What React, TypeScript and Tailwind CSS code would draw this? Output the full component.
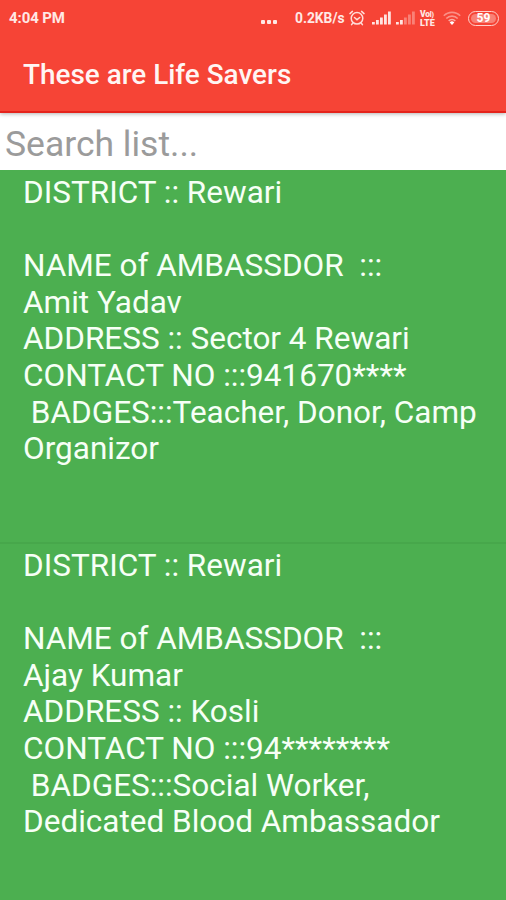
type Ambassador = {
  district: string;
  name: string;
  address: string;
  contact: string;
  badges: string;
};

const ambassadors: Ambassador[] = [
  {
    district: "Rewari",
    name: "Amit Yadav",
    address: "Sector 4 Rewari",
    contact: "941670****",
    badges: "Teacher, Donor, Camp Organizor",
  },
  {
    district: "Rewari",
    name: "Ajay Kumar",
    address: "Kosli",
    contact: "94********",
    badges: "Social Worker, Dedicated Blood Ambassador",
  },
];

const AlarmIcon = () => (
  <svg width="16" height="16" viewBox="0 0 16 16" fill="none" stroke="#ffdcd8" strokeWidth="1.5" strokeLinecap="round">
    <circle cx="8" cy="8.3" r="5.8" />
    <path d="M1 3.6 3.4 1.4M15 3.6 12.6 1.4M3.6 13.2 2.6 14.6M12.4 13.2l1 1.4M5.5 7.5 8 9.7l2.7-2.2" />
  </svg>
);

const SignalIcon = ({ level }: { level: number }) => (
  <svg width="19" height="14" viewBox="0 0 19 14" fill="#ffe4e1">
    {[2.5, 4.5, 7, 10, 13].map((height, i) => (
      <rect
        key={height}
        x={i * 4}
        y={13.5 - height}
        width="2.8"
        height={height}
        opacity={i < level ? 1 : 0.38}
      />
    ))}
  </svg>
);

const WifiIcon = () => (
  <svg width="18" height="14" viewBox="0 0 18 14" fill="none" stroke="#ffd9d5" strokeWidth="1.6">
    <path d="M0.8 4.8a11.6 11.6 0 0 1 16.4 0" opacity="0.5" />
    <path d="M3.3 7.5a8 8 0 0 1 11.4 0" opacity="0.55" />
    <path d="M5.7 10a4.7 4.7 0 0 1 6.6 0" opacity="0.7" />
    <path d="M9 14 6.7 11.4a3.2 3.2 0 0 1 4.6 0Z" fill="#ffffff" stroke="none" />
  </svg>
);

const StatusBar = () => (
  <div className="flex h-9 items-center pl-[9px] text-[#ffe8e5]">
    <span className="w-[252px] text-[15px] font-bold tracking-[-0.1px]">4:04 PM</span>
    <div className="flex w-[34px] gap-[2px] pt-[8px]">
      <span className="h-[4px] w-[4px] rounded-[1px] bg-[#ffe8e5]" />
      <span className="h-[4px] w-[4px] rounded-[1px] bg-[#ffe8e5]" />
      <span className="h-[4px] w-[4px] rounded-[1px] bg-[#ffe8e5]" />
    </div>
    <span className="w-[54px] whitespace-nowrap text-[13.8px] font-bold">0.2KB/s</span>
    <div className="w-[23px]">
      <AlarmIcon />
    </div>
    <div className="w-6">
      <SignalIcon level={5} />
    </div>
    <div className="w-6">
      <SignalIcon level={2} />
    </div>
    <div className="w-[23px] text-[8.5px] leading-[8px] font-black">
      <div className="tracking-[-0.2px]">Vo<span className="text-[7px]">l)</span></div>
      <div className="text-[9px]">LTE</div>
    </div>
    <div className="w-[25px]">
      <WifiIcon />
    </div>
    <div className="flex h-[15px] w-[31px] items-center justify-center rounded-full border-[1.5px] border-[#ffd0cb]">
      <span className="flex h-[9px] w-[25px] items-center justify-center rounded-full bg-[#f98176] text-[12px] font-bold text-white">
        59
      </span>
    </div>
  </div>
);

const AmbassadorCard = ({ district, name, address, contact, badges }: Ambassador) => (
  <div className="h-[373px] shrink-0 border-b-2 border-[#47a74b] pt-[4px] pr-4 pl-[23px] text-[31.5px] leading-[36.6px] whitespace-pre-wrap text-[#f6fff6]">
    <p>DISTRICT :: {district}</p>
    <p>{" "}</p>
    <p>{"NAME of AMBASSDOR  :::"}</p>
    <p>{name}</p>
    <p>ADDRESS :: {address}</p>
    <p>CONTACT NO :::{contact}</p>
    <p>{` BADGES:::${badges}`}</p>
  </div>
);

const App = () => {
  return (
    <div className="flex h-[900px] w-[506px] flex-col overflow-hidden bg-[#4caf50] font-['Roboto',sans-serif]">
      <header className="relative h-[113px] shrink-0 border-b-2 border-[#e5231c] bg-[#f64436] shadow-[0_1px_4px_rgba(0,0,0,0.3)]">
        <StatusBar />
        <h1 className="pt-[23px] pl-[23px] text-[27.9px] leading-8 font-medium text-[#fff5f3]">
          These are Life Savers
        </h1>
      </header>

      <input
        type="text"
        placeholder="Search list..."
        className="h-[57px] shrink-0 bg-white pt-[4px] pl-[5px] text-[35.5px] text-gray-700 outline-none placeholder:text-[#9b9b9b]"
      />

      <main className="flex flex-col pt-px">
        {ambassadors.map((ambassador) => (
          <AmbassadorCard key={ambassador.name} {...ambassador} />
        ))}
      </main>
    </div>
  );
};

export default App;
